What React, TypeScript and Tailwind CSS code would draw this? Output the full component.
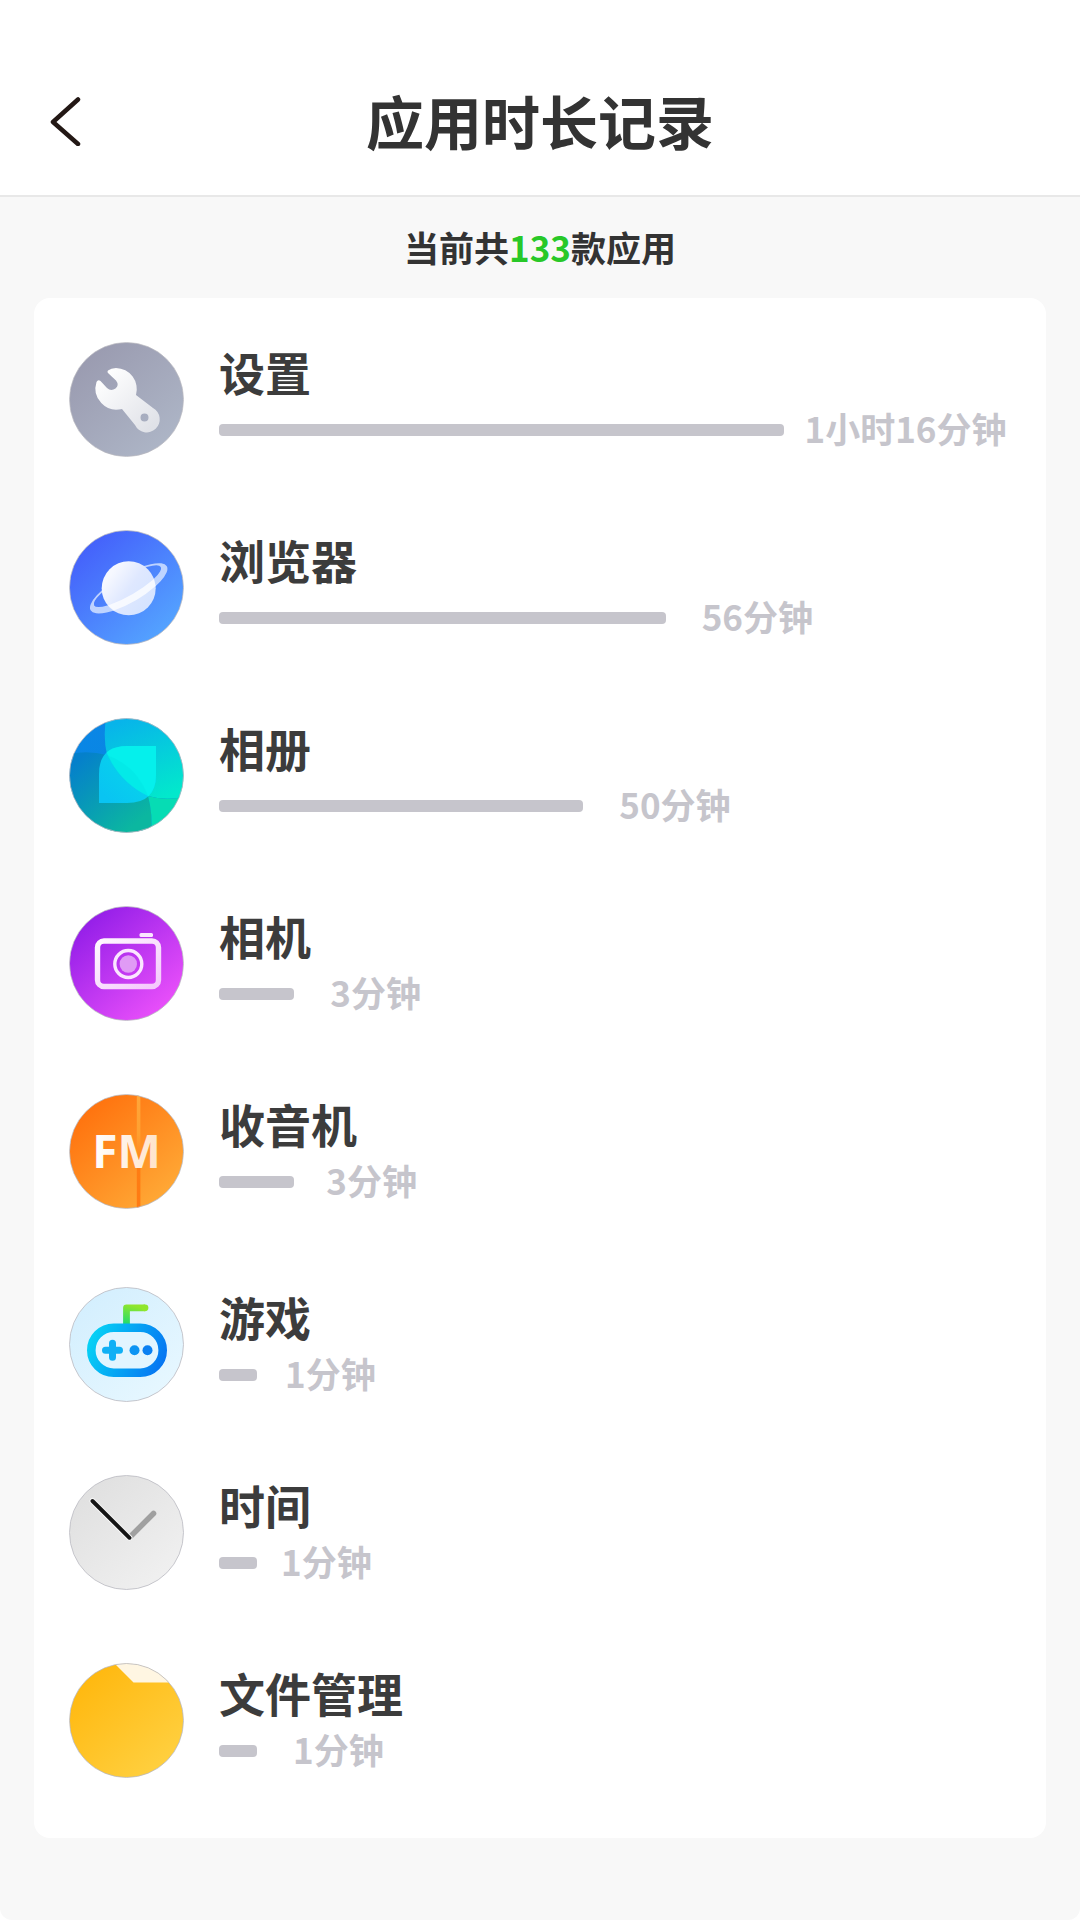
import type { ReactNode } from "react";

interface AppUsage {
    name: string;
    duration: string;
    percent: number;
    gap: string;
    icon: ReactNode;
}

interface IconProps {
    id: string;
    from: string;
    to: string;
    children: ReactNode;
}

// Base circular con degradado diagonal
const RoundIcon = ({ id, from, to, children }: IconProps) => (
    <svg viewBox="0 0 115 115" className="size-full" aria-hidden="true">
        <defs>
            <linearGradient id={`${id}-bg`} x1="0.15" y1="0.1" x2="0.85" y2="0.9">
                <stop offset="0" stopColor={from} />
                <stop offset="1" stopColor={to} />
            </linearGradient>
            <clipPath id={`${id}-clip`}>
                <circle cx="57.5" cy="57.5" r="57" />
            </clipPath>
        </defs>
        <g clipPath={`url(#${id}-clip)`}>
            <circle cx="57.5" cy="57.5" r="57" fill={`url(#${id}-bg)`} />
            {children}
        </g>
        <circle cx="57.5" cy="57.5" r="57" fill="none" stroke="#b9b9c0" strokeWidth="0.8" />
    </svg>
);

const SettingsIcon = () => (
    <RoundIcon id="settings" from="#9a9bb0" to="#adb5c6">
        <defs>
            <linearGradient id="wrench" x1="0.1" y1="0.1" x2="0.9" y2="0.9">
                <stop offset="0" stopColor="#ffffff" />
                <stop offset="1" stopColor="#e0e2e8" />
            </linearGradient>
        </defs>
        <path
            fill="url(#wrench)"
            fillRule="evenodd"
            d="M47 26Q42 26 39 28.5Q37.5 30 39.5 31.5L47 38.5Q50.5 43 46.5 46.5Q42 49.5 38 46L31.5 39Q29 37 27.5 40A21.2 21.2 0 0 0 53 67L66 83A13 13 0 1 0 84 66L67 53A21.2 21.2 0 0 0 47 26ZM79.5 75.5A4 4 0 1 1 71.5 75.5A4 4 0 1 1 79.5 75.5Z"
        />
    </RoundIcon>
);

const BrowserIcon = () => (
    <RoundIcon id="browser" from="#4460fb" to="#54a4ff">
        <defs>
            <linearGradient id="planet" x1="0.2" y1="0.2" x2="0.9" y2="0.7">
                <stop offset="0" stopColor="#f6f8ff" />
                <stop offset="0.5" stopColor="#dfe8ff" />
                <stop offset="1" stopColor="#d6e4ff" />
            </linearGradient>
        </defs>
        <g transform="translate(59.7 58.3) rotate(-30)">
            <path
                fill="#dbe7ff"
                fillOpacity="0.8"
                fillRule="evenodd"
                d="M-44 0A44 14 0 1 1 44 0A44 14 0 1 1 -44 0ZM-38.5 -2.5A38.5 9.5 0 1 0 38.5 -2.5A38.5 9.5 0 1 0 -38.5 -2.5Z"
            />
        </g>
        <circle cx="59.7" cy="58.3" r="27" fill="url(#planet)" />
        <g transform="translate(59.7 58.3) rotate(-30)">
            <path
                fill="#ffffff"
                fillOpacity="0.75"
                d="M-26.5 4.6Q0 9.5 26.5 4.6L24.5 11.5Q0 16.5 -24 11.7Z"
            />
        </g>
    </RoundIcon>
);

const GalleryIcon = () => (
    <RoundIcon id="gallery" from="#0a86e6" to="#0788dc">
        <defs>
            <linearGradient id="petal-low" x1="0.1" y1="0.1" x2="0.8" y2="0.9">
                <stop offset="0" stopColor="#0580cb" />
                <stop offset="1" stopColor="#0bb7a0" />
            </linearGradient>
            <linearGradient id="petal-high" x1="0.3" y1="0" x2="0.7" y2="1">
                <stop offset="0" stopColor="#08b4ea" />
                <stop offset="1" stopColor="#02e8cc" />
            </linearGradient>
            <linearGradient id="leaf" x1="0.1" y1="0.9" x2="0.9" y2="0.2">
                <stop offset="0" stopColor="#09c4f2" />
                <stop offset="1" stopColor="#06d8ea" />
            </linearGradient>
            <clipPath id="leaf-clip">
                <path d="M30 85V56Q30 28 58 28H87V57Q87 85 58 85Z" />
            </clipPath>
        </defs>
        <path fill="url(#petal-low)" d="M0 36Q19 32 38 37Q68 48 79 78Q84 97 82 115H0Z" />
        <path fill="url(#petal-high)" d="M37 0Q34 20 38 37Q50 64 79 78Q96 83 115 79V0Z" />
        <path fill="#06dcb4" d="M79 78Q96 83 115 79V115H82Q84 97 79 78Z" />
        <g clipPath="url(#leaf-clip)">
            <path fill="url(#leaf)" d="M30 28H87V85H30Z" />
            <path fill="#05f0ec" d="M34 25Q46 62 79 78L90 82V25Z" />
            <path fill="#00dfe2" fillOpacity="0.35" d="M38 37Q50 64 79 78Q68 48 38 37Z" />
        </g>
    </RoundIcon>
);

const CameraIcon = () => (
    <RoundIcon id="camera" from="#931ee8" to="#ea50fa">
        <defs>
            <linearGradient id="camera-line" x1="0" y1="0" x2="1" y2="1">
                <stop offset="0" stopColor="#fff8ff" />
                <stop offset="1" stopColor="#f4c8fc" />
            </linearGradient>
        </defs>
        <rect x="28.5" y="35" width="61" height="45.5" rx="6.5" fill="none" stroke="url(#camera-line)" strokeWidth="5.4" />
        <circle cx="59.3" cy="58" r="13.5" fill="none" stroke="#fbe6ff" strokeWidth="3.4" />
        <circle cx="59.3" cy="58" r="8.7" fill="#e09bf5" />
        <rect x="70.5" y="27" width="13.5" height="4" rx="1.5" fill="#fae6ff" />
    </RoundIcon>
);

const RadioIcon = () => (
    <RoundIcon id="radio" from="#ff720e" to="#ffa936">
        <defs>
            <linearGradient id="needle" x1="0" y1="0" x2="0" y2="1">
                <stop offset="0" stopColor="#ffa63a" />
                <stop offset="0.35" stopColor="#ffa030" />
                <stop offset="0.65" stopColor="#ff7d14" />
                <stop offset="1" stopColor="#ff7a12" />
            </linearGradient>
            <linearGradient id="fm" x1="0" y1="0" x2="1" y2="0">
                <stop offset="0" stopColor="#ffffff" />
                <stop offset="1" stopColor="#ffe2c8" />
            </linearGradient>
        </defs>
        <rect x="67.8" y="0" width="3.6" height="115" fill="url(#needle)" />
        <text x="57.5" y="73.5" textAnchor="middle" fill="url(#fm)" className="font-['Open_Sans',sans-serif] text-[46px] font-bold">
            FM
        </text>
    </RoundIcon>
);

const GameIcon = () => (
    <RoundIcon id="game" from="#d4effe" to="#e6f7ff">
        <defs>
            <linearGradient id="pad" gradientUnits="userSpaceOnUse" x1="20" y1="50" x2="92" y2="82">
                <stop offset="0" stopColor="#06d3f5" />
                <stop offset="1" stopColor="#0675f2" />
            </linearGradient>
            <linearGradient id="antenna" gradientUnits="userSpaceOnUse" x1="62" y1="18" x2="57" y2="38">
                <stop offset="0" stopColor="#90e62c" />
                <stop offset="1" stopColor="#1cdb70" />
            </linearGradient>
        </defs>
        <path d="M57.5 38V20.8H76" fill="none" stroke="url(#antenna)" strokeWidth="6.8" strokeLinejoin="round" />
        <circle cx="76" cy="20.8" r="3.4" fill="#90e62c" />
        <rect x="22.3" y="40.7" width="71.4" height="45" rx="22.5" fill="#e2f5ff" stroke="url(#pad)" strokeWidth="8.6" />
        <path d="M36.5 63.2H50.5M43.5 56.2V70.2" stroke="#10b0f5" strokeWidth="7" strokeLinecap="round" />
        <circle cx="65.5" cy="63.2" r="5" fill="#0d94f3" />
        <circle cx="78.5" cy="63.2" r="5" fill="#0a80f2" />
    </RoundIcon>
);

const ClockIcon = () => (
    <RoundIcon id="clock" from="#e0e0e0" to="#f0f0f0">
        <path d="M60.5 62.5L84.5 38.5" stroke="#a0a0a0" strokeWidth="5.5" strokeLinecap="round" />
        <path d="M23.5 26L60.5 62.8" stroke="#f6f6f6" strokeWidth="6" strokeLinecap="round" />
        <path d="M23.5 26L60.5 62.8" stroke="#151515" strokeWidth="3.9" strokeLinecap="round" />
    </RoundIcon>
);

const FilesIcon = () => (
    <RoundIcon id="files" from="#ffb80f" to="#ffd040">
        <path d="M44 -1L64.5 19.5H115V-1Z" fill="#fff6e2" />
    </RoundIcon>
);

// Las apps con menos de dos minutos van en un grupo aparte
const groups: AppUsage[][] = [
    [
        { name: "设置", duration: "1小时16分钟", percent: 71.4, gap: "gap-5", icon: <SettingsIcon /> },
        { name: "浏览器", duration: "56分钟", percent: 56.4, gap: "gap-9", icon: <BrowserIcon /> },
        { name: "相册", duration: "50分钟", percent: 46, gap: "gap-9", icon: <GalleryIcon /> },
        { name: "相机", duration: "3分钟", percent: 9.5, gap: "gap-9", icon: <CameraIcon /> },
        { name: "收音机", duration: "3分钟", percent: 9.5, gap: "gap-8", icon: <RadioIcon /> },
    ],
    [
        { name: "游戏", duration: "1分钟", percent: 4.8, gap: "gap-7", icon: <GameIcon /> },
        { name: "时间", duration: "1分钟", percent: 4.8, gap: "gap-6", icon: <ClockIcon /> },
        { name: "文件管理", duration: "1分钟", percent: 4.8, gap: "gap-9", icon: <FilesIcon /> },
    ],
];

const UsageRow = ({ app }: { app: AppUsage }) => (
    <li className="flex gap-[35px]">
        <div className="size-[115px] shrink-0">{app.icon}</div>
        <div className="min-w-0 flex-1">
            <h2 className="mb-1 text-[46px] leading-[58px] text-[#3c3c3c]">{app.name}</h2>
            <div className={`flex h-[52px] items-center ${app.gap}`}>
                <div className="h-3 shrink-0 rounded bg-[#c6c5cc]" style={{ width: `${app.percent}%` }} />
                <span className="pb-1 text-[35px] leading-[48px] whitespace-nowrap text-[#c6c5cc]">{app.duration}</span>
            </div>
        </div>
    </li>
);

export default function App() {
    return (
        <div className="min-h-screen rounded-b-xl bg-[#f8f8f8] font-['Noto_Sans_CJK_SC',sans-serif] font-bold">
            <header className="grid grid-cols-[1fr_auto_1fr] items-center border-b-2 border-[#e8e8e8] bg-white px-12 pt-[75px] pb-[30px]">
                <button type="button" aria-label="返回" className="w-9 cursor-pointer">
                    <svg viewBox="0 0 36 52" className="w-9" fill="none" stroke="#231815" strokeWidth="4.5" strokeLinecap="round" strokeLinejoin="round">
                        <path d="M30 5.5L5 28L30 50" />
                    </svg>
                </button>
                <h1 className="text-[58px] leading-[90px] text-[#333333]">应用时长记录</h1>
            </header>
            <main className="px-[34px] pb-20">
                <p className="pt-6 pb-[25px] text-center text-[35px] leading-[52px] text-[#333333]">
                    当前共<span className="text-[#28c828]">133</span>款应用
                </p>
                <div className="flex flex-col gap-[78px] rounded-2xl bg-white px-[35px] pt-11 pb-[60px]">
                    {groups.map((apps, index) => (
                        <ul key={index} className="flex flex-col gap-[73px]">
                            {apps.map((app) => (
                                <UsageRow key={app.name} app={app} />
                            ))}
                        </ul>
                    ))}
                </div>
            </main>
        </div>
    );
}
